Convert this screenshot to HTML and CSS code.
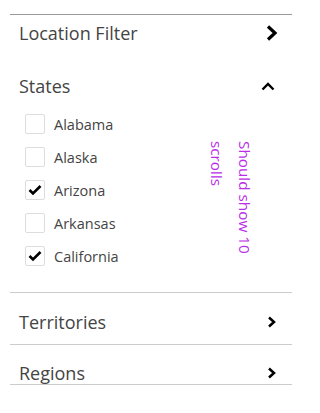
FILE: index.html
```html
<!DOCTYPE html>
<html>
<head>
<meta charset="utf-8">
<link rel="stylesheet" href="styles.css">
</head>
<body>
<div class="panel">
  <div class="row title">
    <span>Location Filter</span>
    <svg class="chev-big" width="12" height="16" viewBox="0 0 12 16"><path d="M2 1.5 L9 8 L2 14.5" fill="none" stroke="#000" stroke-width="3.2" stroke-linejoin="miter"/></svg>
  </div>
  <div class="section states">
    <div class="row sub">
      <span>States</span>
      <svg width="14" height="9" viewBox="0 0 14 9"><path d="M1.5 7.5 L7 2 L12.5 7.5" fill="none" stroke="#000" stroke-width="2.4"/></svg>
    </div>
    <ul class="list">
      <li><span class="box"></span>Alabama</li>
      <li><span class="box"></span>Alaska</li>
      <li><span class="box"><svg width="14" height="12" viewBox="0 0 14 12"><path d="M1.5 6 L5 9.5 L12.5 2" fill="none" stroke="#000" stroke-width="2.6"/></svg></span>Arizona</li>
      <li><span class="box"></span>Arkansas</li>
      <li><span class="box"><svg width="14" height="12" viewBox="0 0 14 12"><path d="M1.5 6 L5 9.5 L12.5 2" fill="none" stroke="#000" stroke-width="2.6"/></svg></span>California</li>
    </ul>
    <div class="note">Should show 10 scrolls</div>
  </div>
  <div class="row item terr">
    <span>Territories</span>
    <svg width="10" height="12" viewBox="0 0 10 12"><path d="M2 1.5 L7 6 L2 10.5" fill="none" stroke="#000" stroke-width="2.5"/></svg>
  </div>
  <div class="row item regions">
    <span>Regions</span>
    <svg width="10" height="12" viewBox="0 0 10 12"><path d="M2 1.5 L7 6 L2 10.5" fill="none" stroke="#000" stroke-width="2.5"/></svg>
  </div>
</div>
</body>
</html>
```
FILE: styles.css
```css
html, body {
  margin: 0;
  padding: 0;
  background: #fff;
}
body {
  font-family: "Open Sans", "Liberation Sans", sans-serif;
  color: #444;
}
.panel {
  margin: 14px 0 0 10px;
  width: 282px;
  border-top: 1px solid #999;
}
.row {
  display: flex;
  align-items: center;
  justify-content: space-between;
  padding: 0 15px 0 9px;
  font-size: 18px;
}
.title {
  height: 35px;
  padding-right: 14px;
}
.section {
  position: relative;
  padding-top: 18px;
  padding-bottom: 26px;
  border-bottom: 1px solid #ccc;
}
.sub {
  height: 36px;
  padding-right: 17px;
}
.list {
  list-style: none;
  margin: 10px 0 0 0;
  padding: 0 0 0 15px;
  display: flex;
  flex-direction: column;
  gap: 13px;
}
.list li {
  display: flex;
  align-items: center;
  height: 20px;
  font-size: 14.5px;
  color: #444;
}
.box {
  width: 18px;
  height: 18px;
  border: 1px solid #ddd;
  border-radius: 2px;
  margin-right: 9px;
  display: flex;
  align-items: center;
  justify-content: center;
}
.note {
  position: absolute;
  left: 193px;
  top: 91px;
  writing-mode: vertical-rl;
  height: 124px;
  font-size: 15.3px;
  line-height: 28px;
  color: #b92ee6;
}
.item {
  border-bottom: 1px solid #ccc;
  box-sizing: border-box;
}
.terr {
  height: 52px;
  padding-top: 6px;
}
.regions {
  height: 40px;
  padding-top: 17px;
}
```
